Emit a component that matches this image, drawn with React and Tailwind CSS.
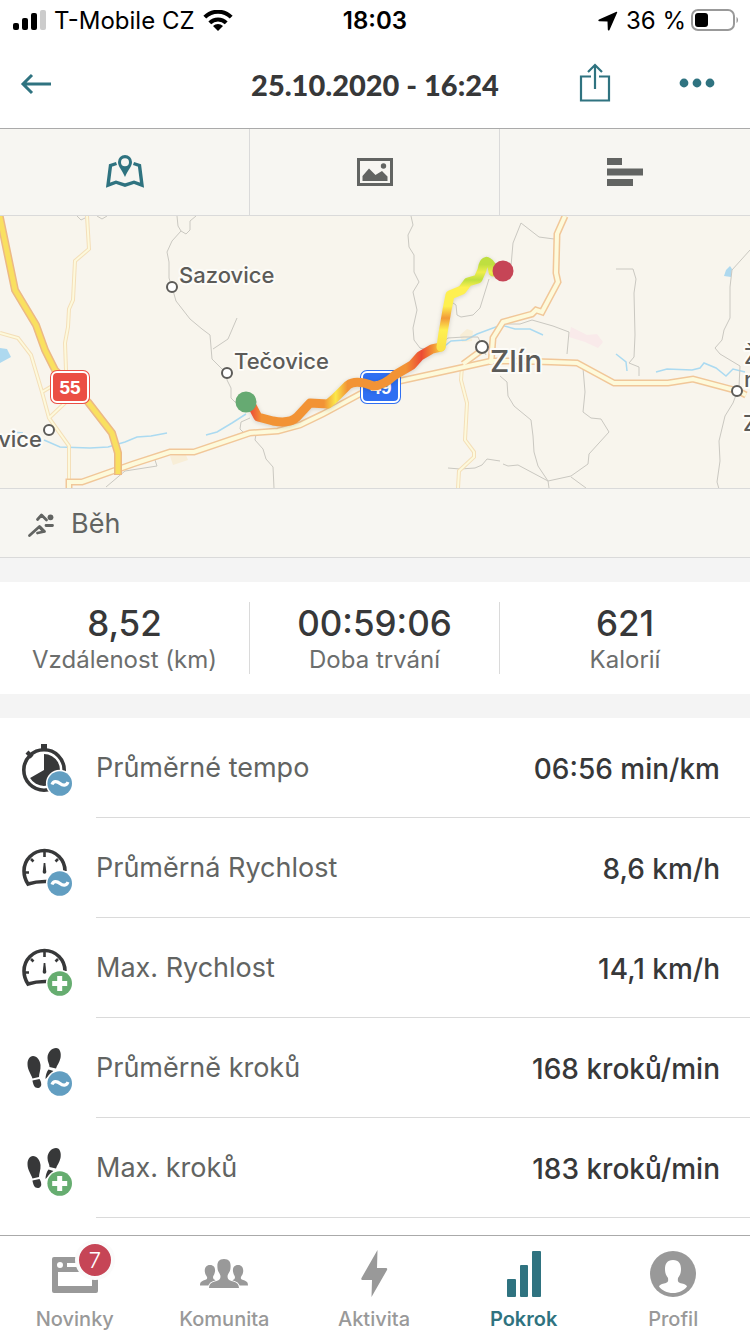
import clsx from "clsx";

const stats = [
  { value: "8,52", label: "Vzdálenost (km)" },
  { value: "00:59:06", label: "Doba trvání" },
  { value: "621", label: "Kalorií" },
];

const rows = [
  { icon: "stopwatch", badge: "avg", label: "Průměrné tempo", value: "06:56 min/km" },
  { icon: "gauge", badge: "avg", label: "Průměrná Rychlost", value: "8,6 km/h" },
  { icon: "gauge", badge: "max", label: "Max. Rychlost", value: "14,1 km/h" },
  { icon: "steps", badge: "avg", label: "Průměrně kroků", value: "168 kroků/min" },
  { icon: "steps", badge: "max", label: "Max. kroků", value: "183 kroků/min" },
];

const StatusBar = () => (
  <div className="grid h-10 grid-cols-[1fr_auto_1fr] items-center px-3 pt-0.5 text-2xl text-black">
    <div className="flex items-center gap-2">
      <svg width="34" height="22" viewBox="0 0 34 22">
        <rect x="1" y="13" width="6" height="7" rx="2" />
        <rect x="10" y="8" width="6" height="12" rx="2" />
        <rect x="19" y="3" width="6" height="17" rx="2" />
        <rect x="28" y="0" width="6" height="20" rx="2" fill="#cccccc" />
      </svg>
      <span>T-Mobile CZ</span>
      <svg width="30" height="22" viewBox="0 0 30 22" fill="none" stroke="#000" strokeWidth="4">
        <path d="M1.800 7.200A18.500 18.500 0 0 1 28.200 7.200" />
        <path d="M6.800 12.800A11.600 11.600 0 0 1 23.200 12.800" />
        <path d="M15 21l-5-5a7.200 7.200 0 0 1 10 0z" fill="#000" stroke="none" />
      </svg>
    </div>
    <span className="font-semibold">18:03</span>
    <div className="flex items-center justify-end gap-1">
      <svg className="mr-1" width="20" height="20" viewBox="0 0 20 20">
        <path d="M18.500.8L1 8.500c-1 .500-.8 1.600.2 1.700l8.300.2.300 8.200c0 1.100 1.200 1.300 1.700.3L19.200 1.600c.2-.6-.2-1-.7-.8z" />
      </svg>
      <span>36 %</span>
      <svg width="48" height="24" viewBox="0 0 48 24">
        <rect x="2" y="1" width="42" height="20" rx="6" fill="none" stroke="#999" strokeWidth="2" />
        <rect x="5" y="4" width="13" height="14" rx="3" />
        <path d="M46.500 8c2 1 2 5 0 6z" fill="#999" />
      </svg>
    </div>
  </div>
);

const Header = () => (
  <header className="grid h-[88px] grid-cols-[1fr_auto_1fr] items-center px-5 text-[#2f7380]">
    <button type="button" aria-label="Zpět" className="w-8">
      <svg width="32" height="22" viewBox="0 0 32 22" fill="none" stroke="currentColor" strokeWidth="3">
        <path d="M31 11H4M12 2L3 11l9 9" />
      </svg>
    </button>
    <h1 className="pt-0.5 font-[Lato] text-[29px] font-black text-[#373839]">25.10.2020 - 16:24</h1>
    <div className="flex items-center justify-end gap-[68px] pr-[15px]">
      <button type="button" aria-label="Sdílet">
        <svg width="32" height="42" viewBox="0 0 32 42" fill="none" stroke="currentColor" strokeWidth="2.200">
          <path d="M12 13.500H2v24h28v-24H20" />
          <path d="M16 26V2M9 9l7-7 7 7" />
        </svg>
      </button>
      <button type="button" aria-label="Více">
        <svg width="36" height="12" viewBox="0 0 36 12" fill="currentColor">
          <circle cx="5" cy="5" r="4.400" />
          <circle cx="18" cy="5" r="4.400" />
          <circle cx="31" cy="5" r="4.400" />
        </svg>
      </button>
    </div>
  </header>
);

const tabClass = "flex items-center justify-center border-[#dadada]";

const ViewTabs = () => (
  <div className="grid h-[88px] grid-cols-3 border-t border-b border-t-[#aaaaaa] border-b-[#dadada] bg-[#f7f6f2] text-[#626462]">
    <button type="button" aria-label="Mapa" className={clsx(tabClass, "border-r text-[#2f7380]")}>
      <svg width="40" height="36" viewBox="0 0 40 36" fill="none" stroke="currentColor">
        <path d="M11.500 9.500L5.500 11.500 3 31.200l8-3 9 3 9-3 8 3-2.500-19.700-6-2" strokeWidth="3.400" />
        <path d="M20 1a7 7 0 0 0-7 7c0 4.500 4 8 7 15 3-7 7-10.500 7-15a7 7 0 0 0-7-7zm0 3.300a4 4 0 1 1 0 8 4 4 0 0 1 0-8z" fill="currentColor" fillRule="evenodd" stroke="none" />
      </svg>
    </button>
    <button type="button" aria-label="Fotky" className={clsx(tabClass, "border-r")}>
      <svg width="36" height="28" viewBox="0 0 36 28" fill="currentColor">
        <rect x="1.500" y="1.500" width="33" height="25" fill="none" stroke="currentColor" strokeWidth="3" />
        <path d="M5.500 23v-5l6.500-7.500 6.500 6.500 1.500-1 5-3 5.500 5.500V23z" />
        <circle cx="26.500" cy="8" r="2.700" />
      </svg>
    </button>
    <button type="button" aria-label="Kola" className={tabClass}>
      <svg width="36" height="28" viewBox="0 0 36 28" fill="currentColor">
        <path d="M0 0h15v7H0zM0 10.500h36v7H0zM0 21h26v7H0z" />
      </svg>
    </button>
  </div>
);

const paths = [
  "M77 0l4 4 4-2 M97 0l5 3 5-3",
  "M177 0l1 10 3 5 5 3 4-4V5l6-5 M181 15l-9 10-5 11 2 10v16l3 9",
  "M172 71l4 14 14 18 12 10 8 6 2 24 10 10 5 5v6l4 8v10l4 4 6 2",
  "M213 133l15-10 9-21",
  "M250 202l-9 4-1 7 3 3",
  "M256 218l-1 6 8 9 3 10 7 8 1 21",
  "M155 244l2 6-32 5-19 16",
  "M411 0l2 9-5 10 1 12 5 8v17l5 10-6 10 4 18-4 18 1 12 6 8 7 2 9-3 12-9 16-1h14l8 18",
  "M489 63l-9 29-7 7-12 2-4-2-1-10-3-2",
  "M511 50l2-23 8-20 18 14 15 2",
  "M503 108l17 0 12-4 21 6 16 6-2 22",
  "M500 160l7 6 1 14 6 10 17 14 2 16 1 16 4 14 10 15 1 7",
  "M565 144l18 8 2 24-2 20 8 6 10 1 8 13-20 22-1 10-17 12-23 5-30-16-10 1-5-2",
  "M571 261l15 11",
  "M616 53l17 0 3 10-2 14 1 42-1 22-5 6 10 4v9",
  "M750 34l-18 20-2 17v31l-6 12-2 10-7 8 5 6 20 12-1 21-6 16-8 13-6 25 1 20-3 21 2 7",
  "M448 252l12 1 15-1 7-3 5-6 13 2",
];

const mainRoads = [
  "M69 272v-6h13l51-18 37-12h24l56-19 28-2 22-6 23-11 37-20 40-13 55-12 36-8h25l35 1 26 1 37 20h54l25-4 45 12 8 4",
  "M463 148l19-14M565 0l-8 18-1 39 2 9-16 30-6-2-4 4-29 8-10 16-2 26",
];

const sideRoads = [
  "M87 0l2 33-14 12-2 39-4 9-1 18-3 16 1 27",
  "M0 117l18 5 13 17 11 37 7 26 20 28v36M42 176l12-7M49 202l18-17",
  "M462 150l-1 14 6 23-2 37 9 12v5l-15 14-1 17",
];

const places = [
  { x: 179, y: 67, name: "Sazovice", cx: 172, cy: 71, big: false },
  { x: 234, y: 153, name: "Tečovice", cx: 227, cy: 157, big: false },
  { x: 490, y: 156, name: "Zlín", cx: 482, cy: 131, big: true },
];

const labelClass = "fill-[#5c5b58] stroke-[#fdfcf8] stroke-4 font-medium [paint-order:stroke] [stroke-linejoin:round]";

const RouteMap = () => (
  <svg className="block h-[272px] w-full bg-[#f8f5ed]" viewBox="0 0 750 272" preserveAspectRatio="xMidYMid slice" fill="none">
    <defs>
      <linearGradient id="west" gradientUnits="userSpaceOnUse" x1="246" y1="0" x2="441" y2="0">
        <stop offset=".03" stopColor="#ee5535" />
        <stop offset=".08" stopColor="#f29335" />
        <stop offset=".4" stopColor="#f29335" />
        <stop offset=".46" stopColor="#fbe84a" />
        <stop offset=".52" stopColor="#f29335" />
        <stop offset=".82" stopColor="#f29335" />
        <stop offset=".9" stopColor="#ec4b35" />
        <stop offset=".96" stopColor="#f29335" />
        <stop offset="1" stopColor="#f8d046" />
      </linearGradient>
      <linearGradient id="north" gradientUnits="userSpaceOnUse" x1="0" y1="131" x2="0" y2="46">
        <stop offset="0" stopColor="#fbe34a" />
        <stop offset=".2" stopColor="#fef050" />
        <stop offset=".34" stopColor="#f29a38" />
        <stop offset=".48" stopColor="#fef050" />
        <stop offset=".7" stopColor="#fef050" />
        <stop offset=".79" stopColor="#bfdf40" />
        <stop offset=".88" stopColor="#f0ee4c" />
        <stop offset=".97" stopColor="#bfdf40" />
      </linearGradient>
    </defs>

    {/* water and built-up areas */}
    <path d="M0 132l7 1 4 8-11 6zM724 60l2-6 4-4 2 3-1 8z" fill="#aed9ef" />
    <path d="M571 111l16 8 10-1 6 8-5 6-13-6-16-5z" fill="#f9eaea" />
    <path d="M460 119l7-6 6 2-1 10-10 1zM170 240l16-1 2 5-15 5z" fill="#f8eed7" />
    <path
      d="M12 216l11 1M44 224l16 7 30 1 18-1 17-5 12-5 14-1 16-3M206 219l11-3 15-9 14-9M441 133l10-8 15-1 11-6 24-9 14 4 15 0 13 6M616 138l10 8 1 9M656 156l11-3 25 1 8-2 4-5 12 5 10 8 7-7 12 3"
      stroke="#abdaf1"
      strokeWidth="1.500"
    />

    <g stroke="#cac8c1">
      {paths.map((d) => (
        <path key={d} d={d} />
      ))}
    </g>

    {/* roads, casing first */}
    {sideRoads.map((d) => (
      <path key={d} d={d} stroke="#f4dfb9" strokeWidth="4" />
    ))}
    {sideRoads.map((d) => (
      <path key={d} d={d} stroke="#fdf9dc" strokeWidth="2" />
    ))}
    {mainRoads.map((d) => (
      <path key={d} d={d} stroke="#f1c799" strokeWidth="7" />
    ))}
    {mainRoads.map((d) => (
      <path key={d} d={d} stroke="#fdfadb" strokeWidth="4" />
    ))}
    <g strokeLinejoin="round">
      <path d="M-2-8L15 74l21 35 9 25 10 20 33 32 24 31 6 20v22" stroke="#ecb985" strokeWidth="8" />
      <path d="M-2-8L15 74l21 35 9 25 10 20 33 32 24 31 6 20v21" stroke="#f9e060" strokeWidth="5" />
    </g>

    {/* road shields */}
    <g className="font-['Liberation_Sans',sans-serif] font-bold" fill="#fff" fontSize="19" textAnchor="middle">
      <rect x="50" y="154" width="40" height="34" rx="7" fill="#eb4e44" />
      <rect x="52" y="156" width="36" height="30" rx="5" stroke="#fff" strokeWidth="2" fill="none" />
      <text x="70" y="178">55</text>
      <rect x="360" y="154" width="41" height="34" rx="7" fill="#2f6ff2" />
      <rect x="362" y="156" width="37" height="30" rx="5" stroke="#fff" strokeWidth="2" fill="none" />
      <text x="381" y="178">49</text>
    </g>

    {/* place names */}
    {places.map((place) => (
      <text key={place.name} x={place.x} y={place.y} className={clsx(labelClass, place.big ? "text-[30px]" : "text-[22px]")}>
        {place.name}
      </text>
    ))}
    <text x="42" y="231" textAnchor="end" className={clsx(labelClass, "text-[22px]")}>Otrokovice</text>
    <g className={clsx(labelClass, "text-[22px]")}>
      <text x="744" y="148">Ž</text>
      <text x="744" y="171">n</text>
      <text x="743" y="215">Z</text>
    </g>
    <g fill="#fff" stroke="#5c5b58" strokeWidth="2">
      {places.map((place) => (
        <circle key={place.name} cx={place.cx} cy={place.cy} r={place.big ? 6 : 5} />
      ))}
      <circle cx="49" cy="214" r="5" />
      <circle cx="737" cy="175" r="5" />
    </g>

    {/* the run itself */}
    <g className="drop-shadow-sm" strokeWidth="9" strokeLinecap="round" strokeLinejoin="round">
      <path
        d="M250 186l8 15 15 4q17 3 24-4l13-14 18 1 7-6 13-13q8-6 25 1 10 0 22-11l17-10 8-9 12-7 9-2"
        stroke="url(#west)"
      />
      <path d="M441 131l2-14 4-23 3-15 12-5 6-8 10-3 4-9q2-11 6-8 4 2 5 10" stroke="url(#north)" />
    </g>
    <circle cx="246" cy="186" r="10.500" fill="#66aa72" />
    <circle cx="503" cy="55" r="10.500" fill="#c64556" />
  </svg>
);

const RunIcon = () => (
  <svg width="28" height="28" viewBox="0 0 28 28" fill="none" stroke="#626462" strokeWidth="2.800" strokeLinecap="round" strokeLinejoin="round">
    <circle cx="23.500" cy="7.300" r="2.900" fill="#626462" stroke="none" />
    <path d="M10.500 9.500l4-4.500 5 5M19 15.500h6.500M2.500 25.500L12.500 16.500l5 5-7 1.500" />
    <path d="M13 17.500l3.500 4" />
  </svg>
);

const StatIcon = ({ icon, badge }) => (
  <svg className="shrink-0" width="56" height="56" viewBox="0 0 56 56" fill="#373839">
    {icon === "stopwatch" && (
      <>
        <circle cx="24" cy="30" r="20.200" fill="none" stroke="#373839" strokeWidth="3.600" />
        <path d="M21 4h6v6h-6zM5.500 13.500l3-3 5 5-3 3z" />
        <path d="M24 30V14A16 16 0 1 1 10.100 38z" />
      </>
    )}
    {icon === "gauge" && (
      <>
        <path d="M45 31A20.500 20.500 0 0 0 4 31q0 7 4 13 9-3 20-2.500" fill="none" stroke="#373839" strokeWidth="3.600" />
        <path d="M24.500 12v5M5 32.500h4M11 19l2.500 2.500M38 19l-2.500 2.500" stroke="#373839" strokeWidth="2.600" />
        <path d="M23.700 23h1.600l1 9a1.800 1.800 0 1 1-3.600 0z" />
      </>
    )}
    {icon === "steps" && (
      <>
        <path d="M13 16c4 0 7 4 7.500 9 .4 5-1.500 8-1.500 12l-6.500 1.500C11 34 7.500 30 7.500 24c0-4 2-8 5.500-8z" />
        <path d="M12.500 40.500l7-1.500c2 3 3 8-1 9-4 .500-5.500-3.500-6-7.500z" />
        <path d="M36 8c4 0 5.500 5 4.500 10-.9 4.500-3.500 7-4.500 10.500L29.500 27c.2-3-2-5-2-9 0-6 4.500-10 8.500-10z" />
        <path d="M28.500 29.500l5 1.500-8 8c0-3 1-7 3-9.500z" />
      </>
    )}
    <circle cx="39.700" cy="43.500" r="13.800" fill="#fff" />
    <circle cx="39.700" cy="43.500" r="12.300" fill={badge === "avg" ? "#629ec1" : "#66ad70"} />
    {badge === "avg" ? (
      <path d="M32 44.500c1.500-4 5-3.500 8-1s6.500 2.500 8-1.500" fill="none" stroke="#fff" strokeWidth="3.200" />
    ) : (
      <path d="M39.700 36v15M32.200 43.500h15" stroke="#fff" strokeWidth="5" />
    )}
  </svg>
);

const Summary = () => (
  <section className="border-y-24 border-[#f4f4f4] py-5">
    <div className="grid grid-cols-3 divide-x divide-[#dadada]">
      {stats.map((stat) => (
        <div key={stat.label} className="flex h-[72px] flex-col items-center">
          <span className="text-[35px] leading-[42px] font-medium text-[#373839]">{stat.value}</span>
          <span className="text-2xl leading-8 text-[#6c6e6d]">{stat.label}</span>
        </div>
      ))}
    </div>
  </section>
);

const Details = () => (
  <ul className="pb-4">
    {rows.map((row) => (
      <li key={row.label} className="flex items-center pl-5">
        <StatIcon icon={row.icon} badge={row.badge} />
        <div className="ml-5 flex h-[100px] flex-1 items-center justify-between border-b border-[#dadada] pt-0.5 pr-[30px]">
          <span className="text-[27px] text-[#626462]">{row.label}</span>
          <span className="text-[28px] font-medium text-[#373839]">{row.value}</span>
        </div>
      </li>
    ))}
  </ul>
);

const NavItem = ({ label, active, badge, children }) => (
  <a
    href="#"
    aria-current={active ? "page" : undefined}
    className={clsx("flex flex-col items-center", active ? "font-semibold text-[#2f7380]" : "font-medium text-[#999999]")}
  >
    <span className="relative">
      <svg width="60" height="48" viewBox="0 0 60 48" fill="currentColor">
        {children}
      </svg>
      {badge && (
        <span className="absolute -top-2.5 -right-2.5 flex size-10 items-center justify-center rounded-full border-4 border-[#fbfbfb] bg-[#c64556] text-[22px] font-light text-white">
          {badge}
        </span>
      )}
    </span>
    <span className="mt-[9px] text-xl leading-6">{label}</span>
  </a>
);

const BottomNav = () => (
  <nav className="mt-auto grid h-[99px] grid-cols-5 border-t border-[#aaaaaa] bg-white pt-[14px] pr-0.5">
    <NavItem label="Novinky" badge={7}>
      <path
        fillRule="evenodd"
        d="M9 7h42a2 2 0 0 1 2 2v32a2 2 0 0 1-2 2H9a2 2 0 0 1-2-2V9a2 2 0 0 1 2-2zm4 15v14h34V22zm2-10a3 3 0 1 0 0 6 3 3 0 0 0 0-6zm7 1v4h20v-4z"
      />
    </NavItem>
    <NavItem label="Komunita">
      <path id="side" d="M16 15c4 0 5.500 3 5 6.500-.4 3-1.500 3.500-2 5.500 0 2 1 2.500 3 3.500-4 1.500-6 2.500-7 5H6c0-4 2-4.500 5-5.500 2-.8 2.500-1.500 2-3-.8-1.500-2-3-2.200-5.500-.3-3.500 1.200-6.500 5.200-6.500z" />
      <use href="#side" transform="matrix(-1 0 0 1 60 0)" />
      <path
        d="M30 9c6 0 7 4 6.500 9-.2 4-2.500 5-3 8 0 3 1 4 4 5 5 1.500 7 2 7.500 7H15c.5-5 2.500-5.500 7.500-7 3-1 4-2 4-5-.5-3-2.800-4-3-8C23 13 24 9 30 9z"
        stroke="#fff"
        strokeWidth="2"
        paintOrder="stroke"
      />
    </NavItem>
    <NavItem label="Aktivita">
      <path d="M33.500 0L17.500 28q-.8 2 1 2h9.500l-.5 17L43 20q.8-2-1-2h-9z" />
    </NavItem>
    <NavItem label="Pokrok" active>
      <rect x="13" y="29" width="9" height="18" rx="1" />
      <rect x="26" y="15" width="8" height="32" rx="1" />
      <rect x="38" y="1" width="9" height="46" rx="1" />
    </NavItem>
    <NavItem label="Profil">
      <circle cx="30" cy="24" r="23" />
      <path
        d="M30 10c6 0 8 4 8 9 0 4-.8 6-3 9-.5 4 0 4.500 4 5.500 3 .5 4.500 1.500 5 3-3 4-8 6.500-14 6.500s-11-2.500-14-6.500c.5-1.500 2-2.500 5-3 4-1 4.500-1.500 4-5.500-2.200-3-3-5-3-9 0-5 2-9 8-9z"
        fill="#fff"
      />
    </NavItem>
  </nav>
);

const App = () => {
  return (
    <div className="flex min-h-screen flex-col bg-white font-[Inter,sans-serif]">
      <StatusBar />
      <Header />
      <ViewTabs />
      <RouteMap />
      <div className="flex h-[70px] items-center gap-4 border-y border-[#dadada] bg-[#f7f6f2] px-[27px] pt-0.5 text-[27px] text-[#626462]">
        <RunIcon />
        <span>Běh</span>
      </div>
      <Summary />
      <Details />
      <BottomNav />
    </div>
  );
};

export default App;
